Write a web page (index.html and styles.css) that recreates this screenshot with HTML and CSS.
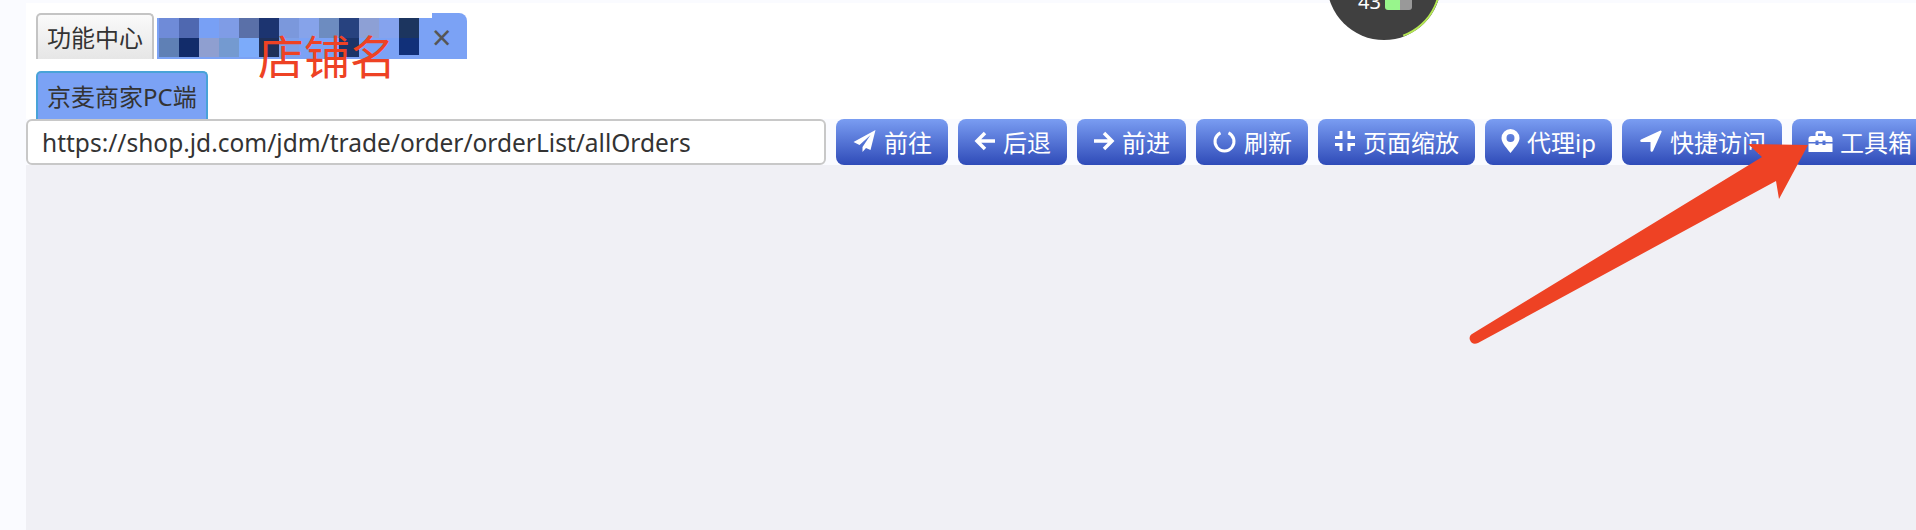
FILE: index.html
```html
<!DOCTYPE html>
<html lang="zh-CN">
<head>
    <meta charset="UTF-8">
    <title>京麦商家PC端</title>
    <link rel="stylesheet" href="styles.css">
</head>
<body>

    <div class="app">
        <!-- Shop tabs -->
        <div class="tab-row">
            <div class="tab">功能中心</div>
            <div class="tab-shop">
                <svg class="mosaic" width="260" height="39" viewBox="0 0 260 39">
                    <rect x="0" y="0" width="20" height="20" fill="#6f8bd8"/>
                    <rect x="20" y="0" width="20" height="20" fill="#4f68b0"/>
                    <rect x="40" y="0" width="20" height="20" fill="#78a0f5"/>
                    <rect x="60" y="0" width="20" height="20" fill="#7f9ce6"/>
                    <rect x="80" y="0" width="20" height="20" fill="#5a70a8"/>
                    <rect x="100" y="0" width="20" height="20" fill="#1c3470"/>
                    <rect x="120" y="0" width="20" height="20" fill="#7b98dc"/>
                    <rect x="140" y="0" width="20" height="20" fill="#86a3ea"/>
                    <rect x="160" y="0" width="20" height="20" fill="#6d8cc0"/>
                    <rect x="180" y="0" width="20" height="20" fill="#27427f"/>
                    <rect x="200" y="0" width="20" height="20" fill="#8da0d5"/>
                    <rect x="220" y="0" width="20" height="20" fill="#85a3ee"/>
                    <rect x="240" y="0" width="20" height="20" fill="#1c355f"/>
                    <rect x="0" y="20" width="20" height="19" fill="#5f80b5"/>
                    <rect x="20" y="20" width="20" height="19" fill="#122c6a"/>
                    <rect x="40" y="20" width="20" height="19" fill="#8f9fd0"/>
                    <rect x="60" y="20" width="20" height="19" fill="#749ad0"/>
                    <rect x="80" y="20" width="20" height="19" fill="#7cabfa"/>
                    <rect x="100" y="20" width="20" height="19" fill="#1f3059"/>
                    <rect x="120" y="20" width="20" height="19" fill="#7ea0e8"/>
                    <rect x="180" y="20" width="20" height="19" fill="#1b3468"/>
                    <rect x="240" y="20" width="20" height="17" fill="#113079"/>
                </svg>
                <span class="tab-close">×</span>
            </div>
        </div>

        <div class="tab-row tab-row-sub">
            <div class="tab tab-active">京麦商家PC端</div>
        </div>

        <!-- Address bar -->
        <div class="toolbar">
            <input class="url-input" type="text" value="https://shop.jd.com/jdm/trade/order/orderList/allOrders">
            <button class="btn">
                <svg class="ico ico-wide" viewBox="0 0 24 24"><path d="M23 1 1 13l6 3L18 6 10 18v5l3.500-4 4.500 2z"/></svg>前往
            </button>
            <button class="btn">
                <svg class="ico ico-line" viewBox="0 0 24 24"><path d="M22 12H4M12 4l-8 8 8 8"/></svg>后退
            </button>
            <button class="btn">
                <svg class="ico ico-line" viewBox="0 0 24 24"><path d="M2 12h18M12 4l8 8-8 8"/></svg>前进
            </button>
            <button class="btn">
                <svg class="ico ico-wide ico-line ico-thin" viewBox="0 0 24 24"><path d="M8 3.800a9.500 9.500 0 1 0 8 0"/></svg>刷新
            </button>
            <button class="btn">
                <svg class="ico ico-line ico-thin" viewBox="0 0 24 24"><path d="M8 2v6.500H2M16 2v6.500h6M8 22v-6.500H2M16 22v-6.500h6"/></svg>页面缩放
            </button>
            <button class="btn">
                <svg class="ico ico-slim" viewBox="1.500 0 21 24"><path fill-rule="evenodd" d="M12 0a9 9 0 0 0-9 9c0 5 6 11 9 15 3-4 9-10 9-15a9 9 0 0 0-9-9zm0 5a4 4 0 1 1 0 8 4 4 0 0 1 0-8z"/></svg>代理ip
            </button>
            <button class="btn">
                <svg class="ico ico-wide" viewBox="0 0 24 24"><path d="M22 1.500a1 1 0 0 1 1 1.500L14.500 22c-.6 1.300-2.500.9-2.500-.5V13H3c-1.400 0-1.800-1.900-.5-2.500z"/></svg>快捷访问
            </button>
            <button class="btn">
                <svg class="ico ico-wide" viewBox="0 0 24 24"><path fill-rule="evenodd" d="M0 13v-3c0-2 1-3 3-3h4V4c0-1 1-2 2-2h6c1 0 2 1 2 2v3h4c2 0 3 1 3 3v3h-7v-1.500h-3V13h-4v-1.500H7V13zM9.500 7h5V4.500h-5zM0 14.500h7V16h3v-1.500h4V16h3v-1.500h7V23H0z"/></svg>工具箱
            </button>
        </div>

        <div class="content"></div>
    </div>

    <!-- Floating speed ball, cut off by the top of the window -->
    <div class="ball">
        <span class="ball-num">43</span>
        <span class="ball-battery"></span>
    </div>

    <!-- Screenshot annotations -->
    <span class="shop-label">店铺名</span>
    <svg class="arrow" width="1916" height="530" viewBox="0 0 1916 530">
        <path d="M1748 144 1808 145 1779 199 1776 181 1478 343C1474 345 1471 343 1470 340 1469 338 1470 335 1472 334L1762 157Z"/>
    </svg>

</body>
</html>
```

FILE: styles.css
```css
/* General Styles */
html, body {
    height: 100%;
}

body {
    margin: 0;
    background-color: #fafbff;
    font-family: "Noto Sans", "Noto Sans CJK SC", sans-serif;
    color: #333;
    overflow: hidden;
}

.app {
    display: flex;
    flex-direction: column;
    height: 527px;
    margin: 3px 0 0 26px;
    background-color: #fff;
    overflow: hidden;
}

/* Tabs */
.tab-row {
    display: flex;
    height: 46px;
    padding: 10px 0 0 10px;
}

.tab-row-sub {
    height: 48px;
    padding-top: 12px;
}

.tab {
    display: flex;
    align-items: center;
    box-sizing: border-box;
    height: 100%;
    padding: 0 9px 2px 9px;
    border: 2px solid #c4c4c4;
    border-bottom: none;
    border-radius: 5px 5px 0 0;
    background: linear-gradient(#fafafa, #e6e6e6);
    font-size: 24px;
    white-space: nowrap;
}

.tab-active {
    border-color: #49a3d8;
    background: #7ba2f5;
}

.tab-shop {
    display: flex;
    align-items: flex-end;
    box-sizing: border-box;
    width: 310px;
    height: 100%;
    margin-left: 3px;
    padding-left: 2px;
    border-radius: 0 8px 0 0;
    background: linear-gradient(#fff, #fff) top left / 275px 5px no-repeat, #7ba2f5;
}

.mosaic {
    display: block;
    flex: none;
    margin-bottom: 2px;
}

.tab-close {
    margin: 0 0 2px 13px;
    color: #555;
    font-size: 34px;
    line-height: 40px;
}

/* Address bar */
.toolbar {
    display: flex;
    flex: none;
    gap: 10px;
    height: 46px;
    background-color: #fafbff;
}

.url-input {
    flex: none;
    box-sizing: border-box;
    width: 800px;
    height: 46px;
    margin: 0;
    padding: 0 14px;
    border: 2px solid #c8c8c8;
    border-radius: 6px;
    background: #fff;
    color: #333;
    font-family: inherit;
    font-size: 24.5px;
    outline: none;
}

.btn {
    display: flex;
    flex: none;
    align-items: center;
    gap: 6px;
    height: 46px;
    margin: 0;
    padding: 0 16px 2px 15px;
    border: none;
    border-radius: 8px;
    background: linear-gradient(#7a9df2, #2f4bb8);
    color: #fff;
    font-family: inherit;
    font-size: 24px;
    white-space: nowrap;
}

.ico {
    flex: none;
    width: 24px;
    height: 24px;
    fill: #fff;
}

.ico-wide {
    width: 27px;
}

.ico-slim {
    width: 21px;
}

.ico-line {
    fill: none;
    stroke: #fff;
    stroke-width: 3.5;
}

.ico-thin {
    stroke-width: 3;
}

/* Speed ball */
.ball {
    position: absolute;
    top: -74px;
    left: 1327px;
    width: 114px;
    height: 114px;
    border-radius: 50%;
    background-color: #404040;
}

.ball::after {
    content: "";
    position: absolute;
    inset: 0;
    box-sizing: border-box;
    border: 2px solid transparent;
    border-right-color: #b5e853;
    border-radius: 50%;
    transform: rotate(25deg);
}

.ball-num {
    position: absolute;
    right: 60px;
    bottom: 28px;
    color: #fff;
    font-size: 20px;
    line-height: 20px;
}

.ball-battery {
    position: absolute;
    left: 58px;
    bottom: 30px;
    width: 27px;
    height: 24px;
    border-radius: 3px;
    background: linear-gradient(90deg, #98f58c 56%, #999 56%);
}

/* Annotations */
.shop-label {
    position: absolute;
    top: 26px;
    left: 258px;
    color: #ee4224;
    font-size: 46px;
    line-height: 60px;
}

.arrow {
    position: absolute;
    top: 0;
    left: 0;
    fill: #ee4224;
}

/* Main area */
.content {
    flex: 1;
    background-color: #f0f0f5;
}
```
